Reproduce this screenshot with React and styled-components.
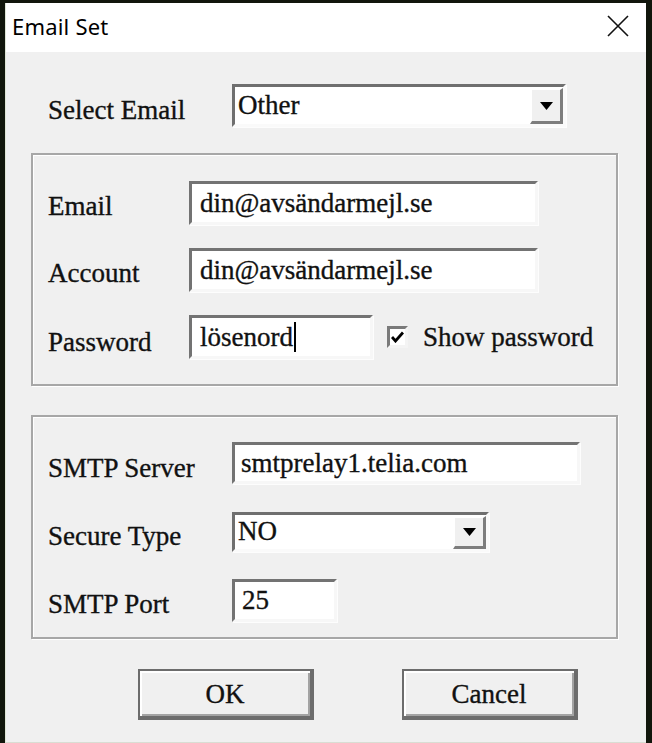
import React from 'react';
import styled, { createGlobalStyle } from 'styled-components';

const GlobalStyle = createGlobalStyle`
  html, body {
    margin: 0;
    padding: 0;
    background: #11160c;
  }
  * { box-sizing: border-box; }
`;

const Window = styled.div`
  margin: 3px 6px 0 5px;
  height: 740px;
  display: flex;
  flex-direction: column;
  background: #f0f0f0;
  border-left: 1px solid #dfe6d6;
  border-bottom: 1px solid #d9ddd3;
`;

const TitleBar = styled.div`
  height: 49px;
  background: #ffffff;
  display: flex;
  align-items: center;
  justify-content: space-between;
  padding: 0 16px 4px 6px;
  font-family: "Noto Sans", "Open Sans", sans-serif;
  font-size: 22px;
  color: #000;
  letter-spacing: 0.2px;
`;

const CloseIcon = () => (
  <svg width="24" height="24" viewBox="0 0 24 24">
    <path d="M2 2 L22 22 M22 2 L2 22" stroke="#111" strokeWidth="1.6" fill="none" />
  </svg>
);

const Body = styled.div`
  flex: 1;
  padding: 32px 28px 0 25px;
  display: flex;
  flex-direction: column;
  font-family: "Liberation Serif", "Times New Roman", serif;
  font-size: 27px;
  color: #111;
  -webkit-text-stroke: 0.35px #111;
`;

const TopRow = styled.div`
  display: grid;
  grid-template-columns: 184px auto;
  align-items: center;
  padding-left: 17px;
`;

const Group = styled.div`
  margin-top: ${p => p.top}px;
  height: ${p => p.h}px;
  border: 2px solid #a7a7a7;
  box-shadow: inset 1px 1px 0 #fff, 1px 1px 0 #fff;
  padding: ${p => p.pad};
  display: grid;
  grid-template-columns: ${p => p.labelW}px auto;
  align-items: center;
  align-content: start;
  row-gap: ${p => p.gap}px;
`;

const Label = styled.div`
  white-space: nowrap;
  padding-top: ${p => p.dy || 6}px;
`;

const Field = styled.div`
  width: ${p => p.w}px;
  height: ${p => p.h}px;
  background: #fff;
  border: 3px solid;
  border-color: #737373 #f7f7f7 #f7f7f7 #737373;
  box-shadow: 1px 1px 0 #fdfdfd;
  padding: 0 0 0 ${p => p.pl || 8}px;
  display: flex;
  align-items: center;
  white-space: nowrap;
  overflow: hidden;
`;

const Caret = styled.span`
  display: inline-block;
  width: 2px;
  height: 30px;
  background: #000;
  margin-left: 1px;
`;

const Combo = styled.div`
  width: ${p => p.w}px;
  height: ${p => p.h}px;
  background: #fff;
  border: 3px solid;
  border-color: #6f6f6f #fafafa #fafafa #6f6f6f;
  box-shadow: 1px 1px 0 #fdfdfd;
  display: flex;
  align-items: stretch;
`;

const ComboText = styled.div`
  flex: 1;
  display: flex;
  align-items: center;
  padding-left: 3px;
`;

const DropButton = styled.div`
  width: 33px;
  margin: 1px 0 0 0;
  background: #f0f0f0;
  border-left: 2px solid #fff;
  border-top: 2px solid #fff;
  border-right: 3px solid #7d7d7d;
  border-bottom: 3px solid #7d7d7d;
  display: flex;
  align-items: center;
  justify-content: center;
`;

const Arrow = () => (
  <svg width="13" height="8" viewBox="0 0 13 8">
    <path d="M0 0 H13 L6.5 8 Z" fill="#000" />
  </svg>
);

const Inline = styled.div`
  display: flex;
  align-items: center;
`;

const CheckBox = styled.div`
  width: 21px;
  height: 22px;
  margin: 0 15px 0 14px;
  background: #fff;
  border: 3px solid;
  border-color: #7a7a7a #f4f4f4 #f4f4f4 #7a7a7a;
  display: flex;
  align-items: center;
  justify-content: center;
`;

const Check = () => (
  <svg width="13" height="12" viewBox="0 0 13 12">
    <path d="M1 6 L4.5 10 L12 1.5" stroke="#000" strokeWidth="2.8" fill="none" />
  </svg>
);

const ButtonRow = styled.div`
  margin-top: 30px;
  display: flex;
  gap: 88px;
  padding-left: 107px;
`;

const Button = styled.div`
  width: 176px;
  height: 51px;
  background: #f0f0f0;
  border: 2px solid #6c6c6c;
  border-right-width: 4px;
  border-bottom-width: 4px;
  box-shadow: inset 2px 2px 0 #fff, inset -2px -2px 0 #a3a3a3;
  display: flex;
  align-items: center;
  justify-content: center;
  padding-top: 2px;
`;

export default function App() {
  return (
    <>
      <GlobalStyle />
      <Window>
        <TitleBar>
          <span>Email Set</span>
          <CloseIcon />
        </TitleBar>
        <Body>
          <TopRow>
            <Label dy={10}>Select Email</Label>
            <Combo w={334} h={43}>
              <ComboText>Other</ComboText>
              <DropButton><Arrow /></DropButton>
            </Combo>
          </TopRow>

          <Group top={26} h={233} pad="26px 15px 0 15px" labelW={141} gap={23}>
            <Label>Email</Label>
            <Field w={349} h={44}>din@avsändarmejl.se</Field>
            <Label>Account</Label>
            <Field w={349} h={44}>din@avsändarmejl.se</Field>
            <Label dy={10}>Password</Label>
            <Inline>
              <Field w={184} h={44}>lösenord<Caret /></Field>
              <CheckBox><Check /></CheckBox>
              <span>Show password</span>
            </Inline>
          </Group>

          <Group top={29} h={224} pad="25px 15px 0 15px" labelW={184} gap={27}>
            <Label dy={10}>SMTP Server</Label>
            <Field w={348} h={42} pl={6}>smtprelay1.telia.com</Field>
            <Label dy={10}>Secure Type</Label>
            <Combo w={257} h={40}>
              <ComboText>NO</ComboText>
              <DropButton><Arrow /></DropButton>
            </Combo>
            <Label dy={8}>SMTP Port</Label>
            <Field w={105} h={43} pl={7}>25</Field>
          </Group>

          <ButtonRow>
            <Button>OK</Button>
            <Button>Cancel</Button>
          </ButtonRow>
        </Body>
      </Window>
    </>
  );
}
